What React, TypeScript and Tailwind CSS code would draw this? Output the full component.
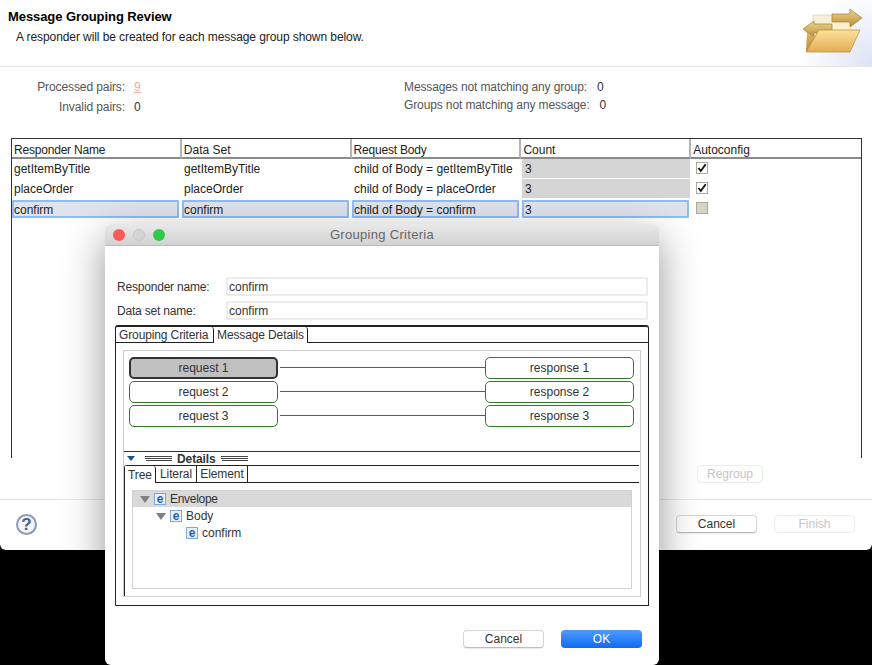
import React from "react";

const font = { fontFamily: '"Liberation Sans", Arial, sans-serif' };

function HeaderCell({ children, last, tight }: { children: React.ReactNode; last?: boolean; tight?: boolean }) {
  return (
    <div
      className={`h-[20px] w-[170px] border-b-2 border-[#8a8a8a] pl-[2px] pt-[3px] leading-[16px] ${last ? "" : "border-r-2 border-r-[#b5b5b5]"} ${
        tight ? "tracking-[-0.2px]" : ""
      }`}
    >
      {children}
    </div>
  );
}

function Cell({ children, grey, selected }: { children?: React.ReactNode; grey?: boolean; selected?: boolean }) {
  if (selected) {
    return (
      <div className="h-[20px] w-[170px] pt-px">
        <div className="h-[18px] w-[167px] rounded-[1px] border-2 border-[#8fbdf2] bg-[#dfe3ee] leading-[16px]">{children}</div>
      </div>
    );
  }
  return (
    <div className="h-[20px] w-[170px]">
      <div className={`h-[19px] pt-[2px] leading-[16px] ${grey ? "w-[168px] bg-[#d5d5d5] pl-[3px]" : "pl-[2px]"}`}>{children}</div>
    </div>
  );
}

function Check({ on }: { on: boolean }) {
  return (
    <div className="h-[20px] pl-[4px] pt-[3px]">
      <div className={`flex h-[12px] w-[12px] items-center justify-center border border-[#a9a998] ${on ? "bg-white" : "bg-[#d4d4c8]"}`}>
        {on && (
          <svg width="12" height="12" viewBox="0 0 12 12">
            <path d="M1.8 6 L4.6 9.6 L10.4 1.6" fill="none" stroke="#111" strokeWidth="2.2" />
          </svg>
        )}
      </div>
    </div>
  );
}

function Row({ a, b, c, selected, on }: { a: string; b: string; c: string; selected?: boolean; on: boolean }) {
  return (
    <div className="flex">
      <Cell selected={selected}>{a}</Cell>
      <Cell selected={selected}>{b}</Cell>
      <Cell selected={selected}>{c}</Cell>
      <Cell grey={!selected} selected={selected}>
        {selected ? <span className="pl-px">3</span> : "3"}
      </Cell>
      <Check on={on} />
    </div>
  );
}

function FolderIcon() {
  return (
    <svg width="62" height="46" viewBox="802 8 62 46">
      <defs>
        <linearGradient id="fold" x1="0" y1="0" x2="0" y2="1">
          <stop offset="0" stopColor="#fbe29a" />
          <stop offset="1" stopColor="#e3ad55" />
        </linearGradient>
        <linearGradient id="back" x1="0" y1="0" x2="0" y2="1">
          <stop offset="0" stopColor="#e5bb67" />
          <stop offset="1" stopColor="#b98a36" />
        </linearGradient>
        <linearGradient id="arr" x1="0" y1="0" x2="0" y2="1">
          <stop offset="0" stopColor="#eed693" />
          <stop offset="1" stopColor="#b98934" />
        </linearGradient>
      </defs>
      <path d="M813 15 H833 V32 H813 Z" fill="#f6efd9" stroke="#d9c79c" strokeWidth="0.6" />
      <path d="M832 22 H852 V30 H832 Z" fill="#fbf1cf" />
      <path d="M832 14 H850 V9 L862 18 L850 27 V22 H832 Z" fill="url(#arr)" stroke="#a97e30" strokeWidth="0.7" />
      <path d="M803 29 L814 21 V24 H832 V33 H814 V38 Z" fill="url(#arr)" stroke="#a97e30" strokeWidth="0.7" />
      <path d="M807 33 L814 37 L819 30 H830 V52 H806 Z" fill="url(#back)" />
      <path d="M819 30 H860 L850 52 H806 Z" fill="url(#fold)" stroke="#b78a38" strokeWidth="0.7" />
    </svg>
  );
}

function Btn({ children, disabled, wide = true }: { children: React.ReactNode; disabled?: boolean; wide?: boolean }) {
  return (
    <div
      className={`flex h-[18px] items-center justify-center rounded-[4px] border bg-white text-[12px] ${wide ? "w-[81px]" : "w-[66px]"} ${
        disabled ? "border-[#ededed] text-[#c4c4c4]" : "border-[#d6d6d6] border-b-[#bdbdbd] text-[#333] shadow-[0_1px_1px_rgba(0,0,0,0.08)]"
      }`}
    >
      {children}
    </div>
  );
}

function Pair({ n, selected }: { n: number; selected?: boolean }) {
  return (
    <div className="flex h-[24px] items-center">
      <div
        className={`flex h-[22px] w-[149px] items-center justify-center rounded-[5px] border text-[12px] text-[#333] ${
          selected ? "border-2 border-[#333] bg-[#c0c0c0]" : "border-[#2e7d22] bg-white"
        }`}
      >
        request {n}
      </div>
      <div className="mb-[2px] ml-[2px] h-px flex-1 bg-[#2e7d22]" />
      <div className="flex h-[22px] w-[149px] items-center justify-center rounded-[5px] border border-[#2e7d22] bg-white text-[12px] text-[#333]">
        response {n}
      </div>
    </div>
  );
}

function Grip() {
  return (
    <div className="flex h-[5px] w-[27px] flex-col justify-between">
      <div className="h-px bg-[#444]" />
      <div className="h-px bg-[#444]" />
      <div className="ml-[1px] h-px bg-[#444]" />
    </div>
  );
}

function ElemIcon() {
  return (
    <div className="flex h-[12px] w-[12px] items-center justify-center border border-[#7fa8d6] bg-[#e8f1fb] text-[12px] font-bold leading-none text-[#2a5ea8]">
      e
    </div>
  );
}

function Tri() {
  return <div className="h-0 w-0 border-x-[5px] border-t-[7px] border-x-transparent border-t-[#808080]" />;
}

function Dialog() {
  return (
    <div className="absolute left-[105px] top-[224px] flex h-[441px] w-[554px] flex-col rounded-[6px] bg-white shadow-[0_14px_40px_rgba(0,0,0,0.42)]">
      <div className="relative flex h-[22px] items-center justify-center rounded-t-[6px] border-b border-[#bcbcbc] bg-gradient-to-b from-[#e9e9e9] to-[#d2d2d2] text-[13px] tracking-[0.3px] text-[#666]">
        <div className="absolute left-[8px] top-[5px] flex gap-[8px]">
          <div className="h-[12px] w-[12px] rounded-full bg-[#fc5b57]" />
          <div className="h-[12px] w-[12px] rounded-full border border-[#c8c8c8] bg-[#d5d5d5]" />
          <div className="h-[12px] w-[12px] rounded-full bg-[#34c84a]" />
        </div>
        Grouping Criteria
      </div>
      <div className="flex flex-col px-[10px] pt-[31px]">
        <div className="flex flex-col gap-[5px]">
          {["Responder name:", "Data set name:"].map((l) => (
            <div key={l} className="flex items-center pl-[2px]">
              <div className="w-[109px] text-[12px] tracking-[-0.2px] text-[#333]">{l}</div>
              <div className="flex h-[19px] w-[422px] items-center border-2 border-[#ececec] pl-[1px] text-[12px] text-[#333]">confirm</div>
            </div>
          ))}
        </div>
        <div className="mt-[5px] h-[281px] rounded-t-[3px] rounded-bl-[1px] border border-t-2 border-[#222]">
          <div className="flex h-[16px] border-b border-[#222] text-[12px] tracking-[-0.12px] text-[#333]">
            <div className="flex w-[98px] items-center rounded-tr-[3px] border-r border-[#222] pl-[3px]">Grouping Criteria</div>
            <div className="-mb-px flex w-[94px] items-center rounded-tr-[3px] border-r border-[#222] bg-white pl-[3px]">Message Details</div>
          </div>
          <div className="ml-[7px] mt-[7px] h-[247px] w-[518px] border border-[#cfcfcf]">
            <div className="pl-[5px] pr-[6px] pt-[5px]">
              <Pair n={1} selected />
              <Pair n={2} />
              <Pair n={3} />
            </div>
            <div className="mt-[23px] flex h-[14px] items-center border-t border-[#333] pl-[3px] text-[12px] font-bold text-[#333]">
              <div className="h-0 w-0 border-x-[4px] border-t-[5px] border-x-transparent border-t-[#1c4f8f]" />
              <div className="ml-[10px]"><Grip /></div>
              <div className="mx-[5px] tracking-[-0.1px]">Details</div>
              <Grip />
            </div>
            <div className="h-[131px] w-[515px] rounded-tl-[3px] border-l border-t border-[#222]">
              <div className="flex h-[17px] border-b border-[#222] text-[12px] tracking-[-0.1px] text-[#333]">
                <div className="-mb-px flex w-[31px] items-center justify-center rounded-tr-[3px] border-r border-[#222] bg-white">Tree</div>
                <div className="flex w-[41px] items-center justify-center border-r border-[#222]">Literal</div>
                <div className="flex w-[51px] items-center justify-center border-r border-[#222]">Element</div>
              </div>
              <div className="ml-[7px] mt-[7px] h-[99px] w-[500px] border border-[#d2d2d2] text-[12px] text-[#333]">
                <div className="flex h-[16px] items-center bg-[#d9d9d9] pl-[7px]">
                  <Tri />
                  <div className="ml-[4px]"><ElemIcon /></div>
                  <div className="ml-[4px] tracking-[-0.3px]">Envelope</div>
                </div>
                <div className="flex h-[18px] items-center pl-[23px]">
                  <Tri />
                  <div className="ml-[4px]"><ElemIcon /></div>
                  <div className="ml-[4px]">Body</div>
                </div>
                <div className="flex h-[16px] items-center pl-[53px]">
                  <ElemIcon />
                  <div className="ml-[4px]">confirm</div>
                </div>
              </div>
            </div>
          </div>
        </div>
        <div className="mt-[24px] flex justify-end gap-[17px] pr-[7px]">
          <Btn>Cancel</Btn>
          <div className="flex h-[18px] w-[81px] items-center justify-center rounded-[4px] bg-gradient-to-b from-[#4c9bfd] to-[#1069f5] text-[12px] text-white">OK</div>
        </div>
      </div>
    </div>
  );
}

export default function App() {
  return (
    <div className="relative h-[665px] w-[872px] overflow-hidden bg-black text-[12px] text-[#222]" style={font}>
      <div className="flex h-[550px] flex-col rounded-b-[6px] bg-white">
        <div className="flex h-[67px] justify-between border-b border-[#e6e6e6] bg-[radial-gradient(ellipse_75px_75px_at_100%_100%,#dce3f5_0%,#ffffff_100%)]">
          <div className="pl-[8px] pt-[9px]">
            <div className="text-[13px] font-bold leading-[15px] tracking-[-0.08px] text-black">Message Grouping Review</div>
            <div className="pl-[8px] pt-[6px] text-[12px] leading-[15px] tracking-[-0.08px]">A responder will be created for each message group shown below.</div>
          </div>
          <div className="pr-[8px] pt-[8px]"><FolderIcon /></div>
        </div>
        <div className="flex h-[71px] pt-[10px] text-[#555]">
          <div className="w-[404px]">
            <div className="flex h-[20px] items-center">
              <div className="w-[125px] text-right tracking-[-0.1px]">Processed pairs:</div>
              <div className="pl-[9px] text-[#f5a9a9] underline">9</div>
            </div>
            <div className="flex h-[20px] items-center">
              <div className="w-[125px] text-right tracking-[-0.1px]">Invalid pairs:</div>
              <div className="pl-[9px] text-[#333]">0</div>
            </div>
          </div>
          <div className="tracking-[-0.12px]">
            <div className="flex h-[18px] items-center pt-[1px]">
              Messages not matching any group:<span className="pl-[10px] text-[#333]">0</span>
            </div>
            <div className="flex h-[19px] items-center">
              Groups not matching any message:<span className="pl-[10px] text-[#333]">0</span>
            </div>
          </div>
        </div>
        <div className="mx-[11px] h-[320px] w-[851px] border border-b-0 border-[#333]">
          <div className="flex">
            <HeaderCell tight>Responder Name</HeaderCell>
            <HeaderCell>Data Set</HeaderCell>
            <HeaderCell tight>Request Body</HeaderCell>
            <HeaderCell>Count</HeaderCell>
            <HeaderCell last>Autoconfig</HeaderCell>
          </div>
          <Row a="getItemByTitle" b="getItemByTitle" c="child of Body = getItemByTitle" on />
          <Row a="placeOrder" b="placeOrder" c="child of Body = placeOrder" on />
          <Row a="confirm" b="confirm" c="child of Body = confirm" selected on={false} />
        </div>
        <div className="flex justify-end pr-[109px] pt-[7px]">
          <Btn disabled wide={false}>Regroup</Btn>
        </div>
        <div className="mt-[16px] flex flex-1 items-start justify-between border-t border-[#e6e6e6] pl-[16px] pr-[17px] pt-[14px]">
          <div className="flex h-[21px] w-[21px] items-center justify-center rounded-full border-2 border-[#8a9ab8] bg-[#f2f4f8] text-[17px] font-bold text-[#4a5f86]">?</div>
          <div className="flex gap-[17px] pt-px">
            <Btn>Cancel</Btn>
            <Btn disabled>Finish</Btn>
          </div>
        </div>
      </div>
      <Dialog />
    </div>
  );
}
